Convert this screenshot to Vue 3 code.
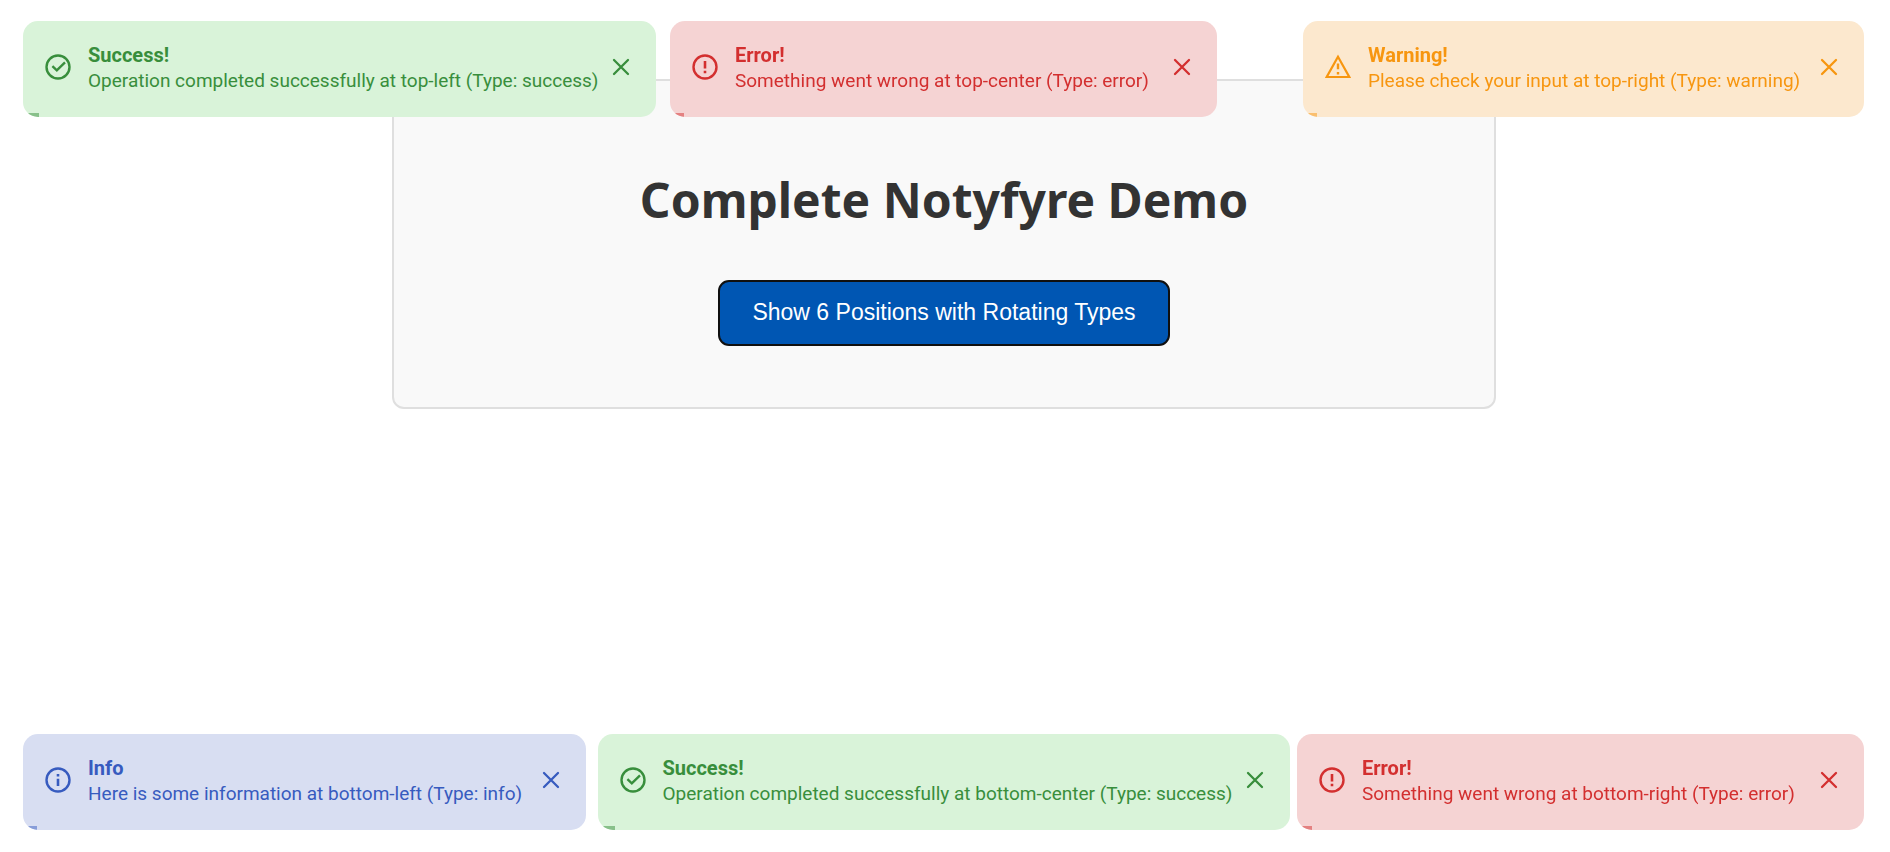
<script setup>
const topRow = [
  { type: 'success', place: 'left', title: 'Success!', text: 'Operation completed successfully at top-left (Type: success)', width: 633, progress: 2.5 },
  { type: 'error', place: 'center', title: 'Error!', text: 'Something went wrong at top-center (Type: error)', width: 547, progress: 2.6 },
  { type: 'warning', place: 'right', title: 'Warning!', text: 'Please check your input at top-right (Type: warning)', width: 561, progress: 2.5 },
]
const bottomRow = [
  { type: 'info', place: 'left', title: 'Info', text: 'Here is some information at bottom-left (Type: info)', width: 563, progress: 2.5 },
  { type: 'success', place: 'center', title: 'Success!', text: 'Operation completed successfully at bottom-center (Type: success)', width: 692, progress: 2.5 },
  { type: 'error', place: 'right', title: 'Error!', text: 'Something went wrong at bottom-right (Type: error)', width: 567, progress: 2.6 },
]
const rows = [
  { edge: 'top', toasts: topRow },
  { edge: 'bottom', toasts: bottomRow },
]
</script>

<template>
  <main class="page">
    <div class="card">
      <h1>Complete Notyfyre Demo</h1>
      <button type="button" class="show">Show 6 Positions with Rotating Types</button>
    </div>
  </main>

  <section v-for="row in rows" :key="row.edge" class="row" :class="row.edge" aria-label="Notifications">
    <div
      v-for="t in row.toasts"
      :key="t.place"
      class="toast"
      :class="[t.type, t.place]"
      :style="{ width: t.width + 'px' }"
      role="status"
    >
      <svg class="icon" viewBox="0 0 30 30" fill="none" stroke="currentColor" aria-hidden="true">
        <path v-if="t.type === 'warning'" d="M15 4.8 26.3 25H3.7Z" stroke-width="2.2" />
        <circle v-else cx="15" cy="15" r="11.5" stroke-width="2.4" />
        <path v-if="t.type === 'success'" d="M9.4 14.2 13.8 18.3 22 10.3" stroke-width="2.4" />
        <path v-if="t.type === 'error'" d="M15 9v7.6M15 18.8v2.4" stroke-width="2.6" />
        <path v-if="t.type === 'info'" d="M15 9v2.5M15 13.8v7.3" stroke-width="2.6" />
        <path v-if="t.type === 'warning'" d="M15 11.5v5.8M15 20v2.4" stroke-width="2.4" />
      </svg>
      <div class="body">
        <strong>{{ t.title }}</strong>
        <span>{{ t.text }}</span>
      </div>
      <button type="button" class="close" aria-label="Close">
        <svg viewBox="0 0 20 20" fill="none" stroke="currentColor" aria-hidden="true">
          <path d="M3 3 17 17M17 3 3 17" stroke-width="2.3" stroke-linecap="round" />
        </svg>
      </button>
      <i class="bar" :style="{ width: t.progress + '%' }"></i>
    </div>
  </section>
</template>

<style>
body {
  background: #fff;
}
</style>

<style scoped>
.page {
  padding: 79px 2px 0 0;
}
.card {
  box-sizing: border-box;
  max-width: 1104px;
  margin: 0 auto;
  padding: 60px 60px 61px;
  border: 2px solid #dfdfdf;
  border-radius: 12px;
  background: #f9f9f9;
  text-align: center;
}
h1 {
  margin: 24px 0 45px;
  color: #333;
  font: 700 48px/70px "Noto Sans", "Open Sans", sans-serif;
}
.show {
  padding: 17px 32px 19px;
  border: 2px solid #101010;
  border-radius: 11px;
  background: #0056b3;
  color: #fff;
  font: 23px/26px "Liberation Sans", Arial, sans-serif;
  cursor: pointer;
}
.row {
  position: fixed;
  right: 26px;
  left: 23px;
  display: grid;
  grid-template-columns: 1fr auto 1fr;
}
.top {
  top: 21px;
}
.bottom {
  bottom: 22px;
}
.toast {
  position: relative;
  box-sizing: border-box;
  display: flex;
  align-items: center;
  gap: 15px;
  height: 96px;
  padding: 0 25px 4px 20px;
  border-radius: 15px;
  overflow: hidden;
  white-space: nowrap;
}
.left {
  justify-self: start;
}
.right {
  justify-self: end;
}
.success {
  background: #d9f3d9;
  color: #388e3c;
}
.error {
  background: #f5d3d3;
  color: #d32f2f;
}
.warning {
  background: #fce8ce;
  color: #f79610;
}
.info {
  background: #d8def2;
  color: #375bbf;
}
.icon {
  flex: none;
  width: 30px;
  height: 30px;
}
.body {
  display: flex;
  flex: 1;
  flex-direction: column;
  min-width: 0;
  padding-top: 2px;
  font: 400 19px/26px Roboto, sans-serif;
}
.body strong {
  font-size: 20px;
  font-weight: 700;
}
.close {
  display: flex;
  flex: none;
  padding: 0;
  border: 0;
  background: none;
  color: inherit;
  cursor: pointer;
}
.close svg {
  width: 20px;
  height: 20px;
}
.bar {
  position: absolute;
  bottom: 0;
  left: 0;
  height: 4px;
  background: currentColor;
  opacity: 0.5;
}
</style>
